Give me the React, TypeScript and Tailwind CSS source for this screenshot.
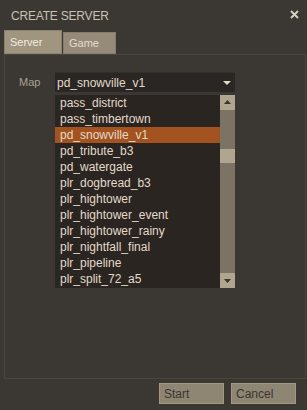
import React from "react";

const maps = [
  "pass_district",
  "pass_timbertown",
  "pd_snowville_v1",
  "pd_tribute_b3",
  "pd_watergate",
  "plr_dogbread_b3",
  "plr_hightower",
  "plr_hightower_event",
  "plr_hightower_rainy",
  "plr_nightfall_final",
  "plr_pipeline",
  "plr_split_72_a5",
];

export default function App() {
  return (
    <div
      className="w-[307px] h-[410px] bg-[#3b3733] flex flex-col overflow-hidden"
      style={{ fontFamily: '"Liberation Sans", Arial, sans-serif' }}
    >
      {/* title */}
      <div className="h-[30px] flex items-start justify-between pl-[11px] pr-[8px] pt-[9px]">
        <span className="text-[12px] leading-[14px] text-[#c9c1b1] tracking-[-0.2px]">CREATE SERVER</span>
        <svg width="9" height="9" viewBox="0 0 9 9" className="mt-[1px]">
          <path d="M1 1 L8 8 M8 1 L1 8" stroke="#d6cebd" strokeWidth="2" />
        </svg>
      </div>
      {/* tabs */}
      <div className="h-[24px] flex items-end pl-[4px]">
        <div className="w-[58px] h-[24px] bg-[#a0967f] border border-[#8a816e] flex items-center pl-[5px] text-[11px] text-[#f2ece0]">
          Server
        </div>
        <div className="ml-[1px] w-[53px] h-[22px] bg-[#958b78] border border-[#857c6b] flex items-center pl-[5px] text-[11px] text-[#e4dccd]">
          Game
        </div>
      </div>
      {/* panel */}
      <div className="ml-[4px] w-[302px] h-[325px] border border-[#4b4640] pt-[17px]">
        <div className="flex items-center h-[20px]">
          <span className="w-[50px] pl-[14px] text-[11px] text-[#a9a191]">Map</span>
          <div className="w-[180px] h-[20px] bg-[#2a2623] border-t border-[#332f2b] flex items-center justify-between pl-[2px] pr-[4px]">
            <span className="text-[12px] text-[#e2dacb]">pd_snowville_v1</span>
            <svg width="8" height="6" viewBox="0 0 8 6">
              <path d="M0 1 L8 1 L4 5 Z" fill="#e2dacb" />
            </svg>
          </div>
        </div>
        <div className="ml-[50px] mt-[3px] w-[180px] h-[193px] bg-[#2a2521] flex">
          <div className="flex-1 flex flex-col">
            {maps.map((m) => (
              <div
                key={m}
                className={
                  "h-[16px] flex items-center pl-[5px] text-[12px] text-[#e2dacb] " +
                  (m === "pd_snowville_v1" ? "bg-[#a2531f]" : "")
                }
              >
                {m}
              </div>
            ))}
          </div>
          <div className="w-[15px] flex flex-col bg-[#7b7363]">
            <div className="h-[15px] bg-[#b0a68f] flex items-center justify-center">
              <svg width="7" height="5" viewBox="0 0 7 5">
                <path d="M0 4 L7 4 L3.5 0 Z" fill="#3a3530" />
              </svg>
            </div>
            <div className="h-[39px]" />
            <div className="h-[14px] bg-[#b0a68f]" />
            <div className="flex-1" />
            <div className="h-[15px] bg-[#b0a68f] flex items-center justify-center">
              <svg width="7" height="5" viewBox="0 0 7 5">
                <path d="M0 1 L7 1 L3.5 5 Z" fill="#3a3530" />
              </svg>
            </div>
          </div>
        </div>
      </div>
      {/* buttons */}
      <div className="flex pl-[159px] gap-[7px] mt-[4px]">
        <div className="w-[65px] h-[21px] bg-[#8f8573] border border-[#a39983] flex items-center pl-[4px] text-[12px] text-[#3a3530]">
          Start
        </div>
        <div className="w-[65px] h-[21px] bg-[#8f8573] border border-[#a39983] flex items-center pl-[4px] text-[12px] text-[#3a3530]">
          Cancel
        </div>
      </div>
    </div>
  );
}
